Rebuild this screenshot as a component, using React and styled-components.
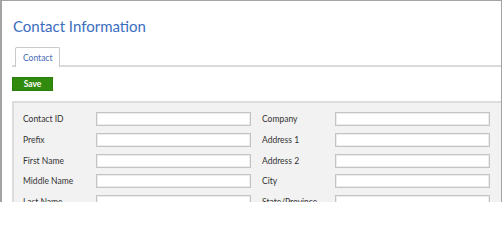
import React from "react";
import styled, { createGlobalStyle } from "styled-components";

const Global = createGlobalStyle`
  html, body { margin: 0; padding: 0; background: #fff; }
  body { font-family: Lato, "Open Sans", sans-serif; }
`;

const Frame = styled.div`
  box-sizing: border-box;
  width: 502px;
  height: 202px;
  overflow: hidden;
  border: 1px solid #a3a3a3;
  border-left-width: 2px;
  border-bottom: none;
  padding-left: 10px;
  display: flex;
  flex-direction: column;
`;

const Title = styled.h1`
  margin: 15px 0 0 1px;
  font-size: 15px;
  line-height: 20px;
  font-weight: 400;
  color: #3b6ec0;
`;

const TabStrip = styled.div`
  margin-top: 11px;
  height: 18px;
  border-bottom: 2px solid #dadada;
  display: flex;
  align-items: flex-end;
  padding-left: 3px;
  margin-right: -2px;
`;

const Tab = styled.div`
  box-sizing: border-box;
  height: 20px;
  margin-bottom: -2px;
  padding: 0 7px;
  border: 1px solid #c9c9c9;
  border-bottom: none;
  border-radius: 2px 2px 0 0;
  background: #fff;
  color: #4a6cb3;
  font-size: 8.5px;
  display: flex;
  align-items: center;
`;

const Toolbar = styled.div`
  margin-top: 10px;
  display: flex;
`;

const SaveButton = styled.button`
  box-sizing: border-box;
  width: 41px;
  height: 14px;
  padding: 0;
  border: 1px solid #2a7d0a;
  background: #2f8a0e;
  color: #fff;
  font-family: Lato, sans-serif;
  font-weight: 700;
  font-size: 8.5px;
  line-height: 12px;
`;

const Panel = styled.div`
  margin-top: 10px;
  margin-right: -2px;
  flex: 1;
  background: #f2f2f2;
  border-top: 2px solid #dcdcdc;
  border-left: 2px solid #dcdcdc;
  padding: 9px 0 0 9px;
`;

const Grid = styled.div`
  display: grid;
  grid-template-columns: 73px 166px 73px 155px;
  row-gap: 6.75px;
  align-items: center;
`;

const Label = styled.label`
  font-size: 8.5px;
  color: #333;
  white-space: nowrap;
`;

const Input = styled.input`
  box-sizing: border-box;
  width: 155px;
  height: 14px;
  margin: 0;
  border: 1px solid #c4c4c4;
  box-shadow: inset 0 0 0 1px #ececec;
  background: #fff;
  padding: 0 3px;
`;

const rows = [
  ["Contact ID", "Company"],
  ["Prefix", "Address 1"],
  ["First Name", "Address 2"],
  ["Middle Name", "City"],
  ["Last Name", "State/Province"],
];

export default function App() {
  return (
    <>
      <Global />
      <Frame>
        <Title>Contact Information</Title>
        <TabStrip>
          <Tab>Contact</Tab>
        </TabStrip>
        <Toolbar>
          <SaveButton>Save</SaveButton>
        </Toolbar>
        <Panel>
          <Grid>
            {rows.map(([a, b]) => (
              <React.Fragment key={a}>
                <Label>{a}</Label>
                <Input />
                <Label>{b}</Label>
                <Input />
              </React.Fragment>
            ))}
          </Grid>
        </Panel>
      </Frame>
    </>
  );
}
